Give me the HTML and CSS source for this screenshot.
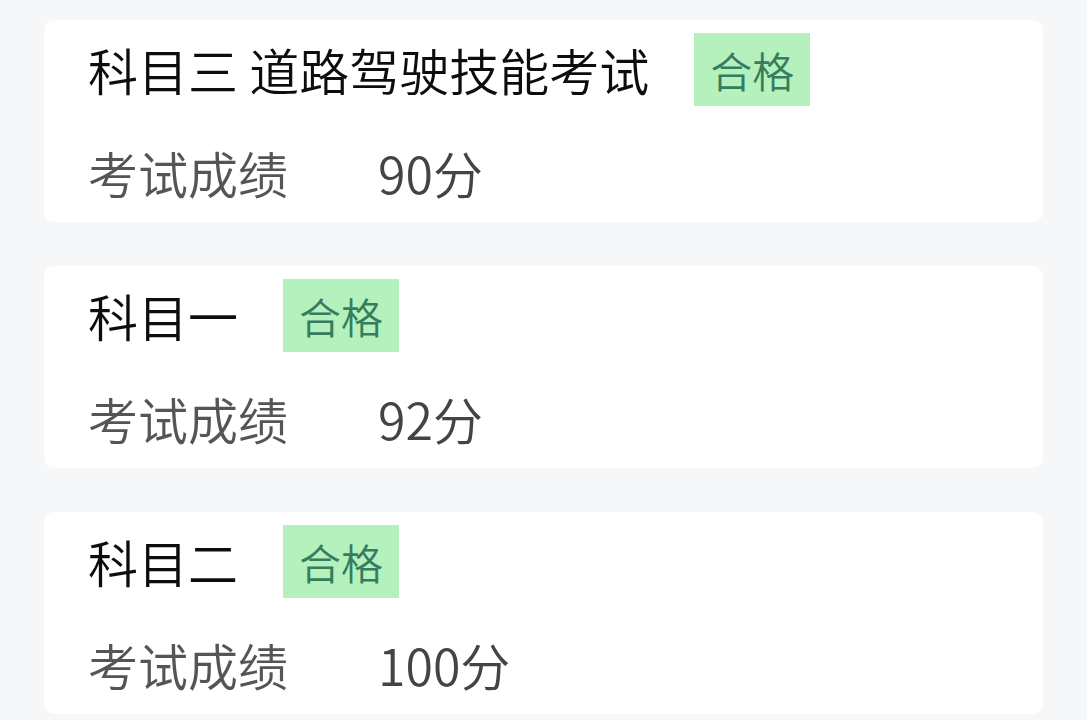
FILE: index.html
```html
<!DOCTYPE html>
<html lang="zh-CN">
<head>
<meta charset="utf-8">
<title>考试成绩</title>
<link rel="stylesheet" href="styles.css">
</head>
<body>
<main class="list">
  <section class="card">
    <div class="head">
      <span class="title">科目三 道路驾驶技能考试</span>
      <span class="badge">合格</span>
    </div>
    <div class="row">
      <span class="label">考试成绩</span>
      <span class="value">90分</span>
    </div>
  </section>
  <section class="card">
    <div class="head">
      <span class="title">科目一</span>
      <span class="badge">合格</span>
    </div>
    <div class="row">
      <span class="label">考试成绩</span>
      <span class="value">92分</span>
    </div>
  </section>
  <section class="card">
    <div class="head">
      <span class="title">科目二</span>
      <span class="badge">合格</span>
    </div>
    <div class="row">
      <span class="label">考试成绩</span>
      <span class="value">100分</span>
    </div>
  </section>
</main>
</body>
</html>
```

FILE: styles.css
```css
html, body {
  margin: 0;
  padding: 0;
  background: #f5f7f9;
  font-family: "Noto Sans CJK SC", "Noto Sans", sans-serif;
  font-weight: 350;
}

.list {
  display: flex;
  flex-direction: column;
  gap: 44px;
  padding: 20px 44px;
}

.card {
  background: #ffffff;
  border-radius: 10px;
  height: 202px;
  box-sizing: border-box;
  padding: 13px 44px 15px;
  display: flex;
  flex-direction: column;
  gap: 31px;
}

.head {
  display: flex;
  align-items: center;
  gap: 45px;
  height: 73px;
}

.title {
  font-size: 50px;
  line-height: 73px;
  color: #0d0d0d;
}

.badge {
  background: #b5f1bd;
  color: #357d5e;
  font-size: 42px;
  line-height: 73px;
  padding: 0 16px;
}

.row {
  display: flex;
  align-items: center;
  height: 70px;
}

.label {
  width: 290px;
  font-size: 50px;
  line-height: 70px;
  color: #555555;
}

.value {
  font-size: 50px;
  line-height: 70px;
  color: #444444;
}
```
